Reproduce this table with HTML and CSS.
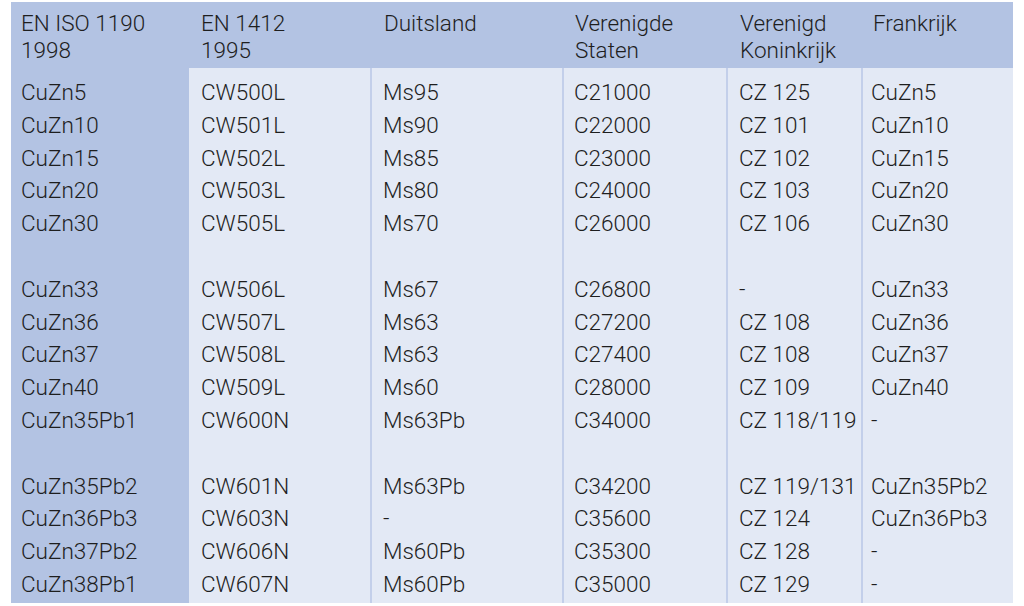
FILE: index.html
```html
<!DOCTYPE html>
<html>
<head>
<meta charset="utf-8">
<link rel="stylesheet" href="styles.css">
</head>
<body>
<table class="grid">
  <colgroup>
    <col class="c1"><col class="c2"><col class="c3"><col class="c4"><col class="c5"><col class="c6">
  </colgroup>
  <thead>
    <tr>
      <th>EN ISO 1190<br>1998</th>
      <th>EN 1412<br>1995</th>
      <th>Duitsland</th>
      <th>Verenigde<br>Staten</th>
      <th>Verenigd<br>Koninkrijk</th>
      <th>Frankrijk</th>
    </tr>
  </thead>
  <tbody>
    <tr class="first"><td>CuZn5</td><td>CW500L</td><td>Ms95</td><td>C21000</td><td>CZ 125</td><td>CuZn5</td></tr>
    <tr><td>CuZn10</td><td>CW501L</td><td>Ms90</td><td>C22000</td><td>CZ 101</td><td>CuZn10</td></tr>
    <tr><td>CuZn15</td><td>CW502L</td><td>Ms85</td><td>C23000</td><td>CZ 102</td><td>CuZn15</td></tr>
    <tr><td>CuZn20</td><td>CW503L</td><td>Ms80</td><td>C24000</td><td>CZ 103</td><td>CuZn20</td></tr>
    <tr><td>CuZn30</td><td>CW505L</td><td>Ms70</td><td>C26000</td><td>CZ 106</td><td>CuZn30</td></tr>
    <tr class="blank"><td></td><td></td><td></td><td></td><td></td><td></td></tr>
    <tr><td>CuZn33</td><td>CW506L</td><td>Ms67</td><td>C26800</td><td>-</td><td>CuZn33</td></tr>
    <tr><td>CuZn36</td><td>CW507L</td><td>Ms63</td><td>C27200</td><td>CZ 108</td><td>CuZn36</td></tr>
    <tr><td>CuZn37</td><td>CW508L</td><td>Ms63</td><td>C27400</td><td>CZ 108</td><td>CuZn37</td></tr>
    <tr><td>CuZn40</td><td>CW509L</td><td>Ms60</td><td>C28000</td><td>CZ 109</td><td>CuZn40</td></tr>
    <tr><td>CuZn35Pb1</td><td>CW600N</td><td>Ms63Pb</td><td>C34000</td><td>CZ 118/119</td><td>-</td></tr>
    <tr class="blank"><td></td><td></td><td></td><td></td><td></td><td></td></tr>
    <tr><td>CuZn35Pb2</td><td>CW601N</td><td>Ms63Pb</td><td>C34200</td><td>CZ 119/131</td><td>CuZn35Pb2</td></tr>
    <tr><td>CuZn36Pb3</td><td>CW603N</td><td>-</td><td>C35600</td><td>CZ 124</td><td>CuZn36Pb3</td></tr>
    <tr><td>CuZn37Pb2</td><td>CW606N</td><td>Ms60Pb</td><td>C35300</td><td>CZ 128</td><td>-</td></tr>
    <tr class="last"><td>CuZn38Pb1</td><td>CW607N</td><td>Ms60Pb</td><td>C35000</td><td>CZ 129</td><td>-</td></tr>
  </tbody>
</table>
</body>
</html>
```

FILE: styles.css
```css
html, body {
  margin: 0;
  padding: 0;
  background: #ffffff;
}
body {
  padding: 2px 11px 0 11px;
  font-family: Roboto, "Liberation Sans", sans-serif;
  font-weight: 300;
  font-size: 22.5px;
  color: #1e1e1e;
}
.grid {
  table-layout: fixed;
  width: 1002px;
  border-collapse: collapse;
  border-spacing: 0;
}
.c1 { width: 178px; }
.c2 { width: 182px; }
.c3 { width: 192px; }
.c4 { width: 164px; }
.c5 { width: 135px; }
.c6 { width: 151px; }

.grid th {
  background: #b3c3e3;
  text-align: left;
  vertical-align: top;
  font-weight: 300;
  line-height: 26.5px;
  height: 66px;
  box-sizing: border-box;
  padding: 8px 0 0 10px;
  white-space: nowrap;
}
.grid th:nth-child(2) { padding-left: 12px; }
.grid th:nth-child(3) { padding-left: 13px; }
.grid th:nth-child(4) { padding-left: 12px; }
.grid th:nth-child(5) { padding-left: 13px; }
.grid th:nth-child(6) { padding-left: 11px; }

.grid td {
  background: #e3e9f5;
  line-height: 32.8px;
  height: 32.8px;
  padding: 0 0 0 10px;
  white-space: nowrap;
  vertical-align: middle;
}
.grid td:first-child {
  background: #b3c3e3;
}
.grid td:nth-child(2) { padding-left: 12px; }
.grid td:nth-child(n+3) { border-left: 2px solid #c3cfea; }
.grid td:nth-child(3) { padding-left: 11px; }
.grid td:nth-child(4) { padding-left: 10px; }
.grid td:nth-child(5) { padding-left: 11px; }
.grid td:nth-child(6) { padding-left: 8px; }

.grid tr.first td { padding-top: 8px; }
.grid tr.last td { padding-bottom: 2px; }
```
